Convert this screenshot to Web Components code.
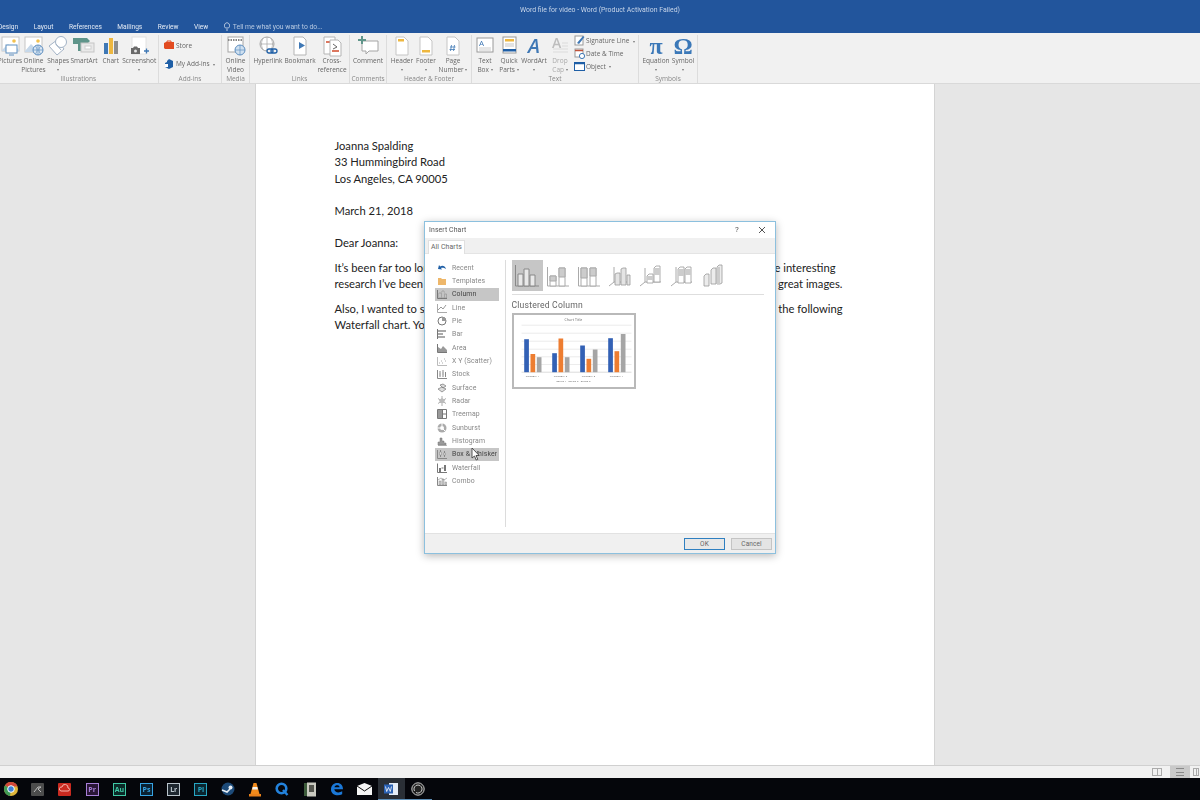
<!DOCTYPE html>
<html>
<head>
<meta charset="utf-8">
<title>Word</title>
<style>
    html, body { margin: 0; height: 100%; overflow: hidden; background: #e6e6e6; }
    svg { display: block; }
</style>
</head>
<body>
<word-app>
    <title-bar slot="top"></title-bar>
    <word-ribbon slot="top">
        <r-group label="Illustrations" w="160.5" style="margin-left:-1.5px">
            <r-btn w="23">
                <svg slot="icon" width="22" height="22" viewBox="0 0 22 22"><rect x="3" y="2" width="17" height="14" fill="#fff" stroke="#c5c5c5"/><path d="M3 15l6-6 4 4 3-2 4 4v1H3z" fill="#c6d8ea"/><circle cx="15" cy="6" r="1.8" fill="#f2c14e"/><rect x="7" y="10" width="11" height="8" fill="#fff" stroke="#5f8fc0"/><path d="M10 20h5" stroke="#5f8fc0"/></svg>
                Pictures
            </r-btn>
            <r-btn w="24">
                <svg slot="icon" width="22" height="22" viewBox="0 0 22 22"><rect x="2" y="2" width="17" height="15" fill="#fff" stroke="#c5c5c5"/><path d="M2 16l6-7 4 4 3-2 4 4v2H2z" fill="#c6d8ea"/><circle cx="15" cy="6" r="1.8" fill="#f2c14e"/><circle cx="15" cy="15" r="5" fill="#dce8f4" stroke="#5f8fc0"/><path d="M10 15h10M15 10v10M12.500 11c2 3 2 5 0 8M17.500 11c-2 3-2 5 0 8" stroke="#5f8fc0" stroke-width=".7" fill="none"/></svg>
                Online<br>Pictures
            </r-btn>
            <r-btn w="25.5">
                <svg slot="icon" width="22" height="22" viewBox="0 0 22 22"><path d="M2 11l8-6 7 9-7 6z" fill="#fff" stroke="#a3b3c6"/><circle cx="14" cy="7" r="5.500" fill="#fff" stroke="#a3b3c6"/><path d="M9 9l5 6" stroke="#a3b3c6"/></svg>
                Shapes<br><r-caret></r-caret>
            </r-btn>
            <r-btn w="26">
                <svg slot="icon" width="24" height="22" viewBox="0 0 24 22"><path d="M1 3h14l3 3-3 3H9v7H6V9H1z" fill="#5f958a"/><rect x="9" y="8" width="13" height="9" fill="#e9e9e9" stroke="#c5c5c5"/><rect x="13" y="11" width="6" height="3" fill="#fff" stroke="#d0d0d0"/></svg>
                SmartArt
            </r-btn>
            <r-btn w="27.5">
                <svg slot="icon" width="20" height="22" viewBox="0 0 20 22"><rect x="3" y="8" width="4" height="11" fill="#3f78b5"/><rect x="8" y="3" width="4" height="16" fill="#eeb73f"/><rect x="13" y="6" width="4" height="13" fill="#8e8e8e"/></svg>
                Chart
            </r-btn>
            <r-btn w="29.500">
                <svg slot="icon" width="24" height="22" viewBox="0 0 24 22"><rect x="5" y="2" width="14" height="17" fill="#fff" stroke="#e2e2e2"/><path d="M4 13h2l1-1.500h3l1 1.500h2v6H4z" fill="#6a6a6a"/><circle cx="8.500" cy="16" r="1.500" fill="#e5e5e5"/><path d="M17 16h5M19.500 13.500v5" stroke="#3f78b5" stroke-width="1.300"/></svg>
                Screenshot<br><r-caret></r-caret>
            </r-btn>
        </r-group>
        <r-group label="Add-ins" w="63" stack>
            <r-small gap="2">
                <svg slot="icon" width="10" height="10" viewBox="0 0 10 10"><path d="M0 3l2-1h8v7H1L0 8z" fill="#e24b20"/><path d="M3 3V1h4v2" fill="none" stroke="#e24b20"/></svg>
                Store
            </r-small>
            <r-small gap="2">
                <svg slot="icon" width="10" height="10" viewBox="0 0 10 10"><path d="M5 0l4 2v6L5 10 1 8V4l2-1V2z" fill="#1f5fa6"/><rect x="1" y="5" width="3" height="3" fill="#fff"/></svg>
                My Add-ins &nbsp;<r-caret></r-caret>
            </r-small>
        </r-group>
        <r-group label="Media" w="28">
            <r-btn w="27">
                <svg slot="icon" width="22" height="22" viewBox="0 0 22 22"><rect x="3" y="2" width="15" height="15" fill="#fff" stroke="#a5a5a5"/><path d="M3 5h15" stroke="#888" stroke-width="2" stroke-dasharray="1.500 1"/><circle cx="15" cy="15" r="5" fill="#cfe0f0" stroke="#5f8fc0"/><path d="M10 15h10M15 10v10" stroke="#5f8fc0" stroke-width=".7"/></svg>
                Online<br>Video
            </r-btn>
        </r-group>
        <r-group label="Links" w="100" pad="2">
            <r-btn w="32">
                <svg slot="icon" width="24" height="22" viewBox="0 0 24 22"><circle cx="11" cy="9" r="7" fill="#fff" stroke="#a5a5a5"/><path d="M4 9h14M11 2v14M7 3.500c-2 3-2 8 0 11M15 3.500c2 3 2 8 0 11" stroke="#a5a5a5" stroke-width=".7" fill="none"/><rect x="11" y="14" width="6" height="4" rx="2" fill="#f1f1f1" stroke="#1f5fa6" stroke-width="1.300"/><rect x="15" y="14" width="6" height="4" rx="2" fill="none" stroke="#1f5fa6" stroke-width="1.300"/></svg>
                Hyperlink
            </r-btn>
            <r-btn w="32">
                <svg slot="icon" width="20" height="22" viewBox="0 0 20 22"><path d="M4 2h9l3 3v15H4z" fill="#fff" stroke="#b5b5b5"/><path d="M9 7l6 3.500L9 14z" fill="#3f78b5"/></svg>
                Bookmark
            </r-btn>
            <r-btn w="32">
                <svg slot="icon" width="22" height="22" viewBox="0 0 22 22"><path d="M3 2h11v17H3z" fill="#fff" stroke="#b5b5b5"/><path d="M5 7h6" stroke="#d04a2a" stroke-width="1.500"/><path d="M9 5h8l3 3v13H9z" fill="#fff" stroke="#b5b5b5"/><path d="M11 16h7" stroke="#d04a2a" stroke-width="1.500"/><path d="M12 9l4 3-4 2" fill="none" stroke="#666"/></svg>
                Cross-<br>reference
            </r-btn>
        </r-group>
        <r-group label="Comments" w="37">
            <r-btn w="36">
                <svg slot="icon" width="24" height="22" viewBox="0 0 24 22"><path d="M6 6h16v10H13l-3 3v-3H6z" fill="#fff" stroke="#a5a5a5"/><path d="M2 5h8M6 1v8" stroke="#5f958a" stroke-width="2"/></svg>
                Comment
            </r-btn>
        </r-group>
        <r-group label="Header &amp; Footer" w="85" pad="3">
            <r-btn w="24">
                <svg slot="icon" width="18" height="22" viewBox="0 0 18 22"><path d="M3 2h8l4 4v14H3z" fill="#fff" stroke="#c5c5c5"/><rect x="5" y="4" width="6" height="2.500" fill="#eeb73f"/></svg>
                Header<br><r-caret></r-caret>
            </r-btn>
            <r-btn w="24">
                <svg slot="icon" width="18" height="22" viewBox="0 0 18 22"><path d="M3 2h8l4 4v14H3z" fill="#fff" stroke="#c5c5c5"/><rect x="5" y="15" width="8" height="2.500" fill="#eeb73f"/></svg>
                Footer<br><r-caret></r-caret>
            </r-btn>
            <r-btn w="30">
                <svg slot="icon" width="18" height="22" viewBox="0 0 18 22"><path d="M3 2h8l4 4v14H3z" fill="#fff" stroke="#c5c5c5"/><path d="M7.500 10l-1 6M10.500 10l-1 6M6 12h5.500M5.500 14.500h5.500" stroke="#3f78b5" stroke-width=".8"/></svg>
                Page<br>Number <r-caret></r-caret>
            </r-btn>
        </r-group>
        <r-group label="Text" w="167" pad="2">
            <r-btn w="22">
                <svg slot="icon" width="20" height="22" viewBox="0 0 20 22"><rect x="2" y="3" width="16" height="14" fill="#fff" stroke="#9a9a9a"/><path d="M4 13h12M4 15h12" stroke="#ccc"/><text x="4" y="11" font-family="Open Sans" font-size="8" fill="#3f78b5">A</text></svg>
                Text<br>Box <r-caret></r-caret>
            </r-btn>
            <r-btn w="26">
                <svg slot="icon" width="18" height="22" viewBox="0 0 18 22"><rect x="3" y="2" width="13" height="16" fill="#fff" stroke="#9a9a9a"/><rect x="5" y="4" width="9" height="2.500" fill="#eeb73f"/><path d="M5 9h9M5 11h9" stroke="#c5c5c5"/><rect x="3" y="14" width="13" height="2.500" fill="#1f5fa6"/></svg>
                Quick<br>Parts <r-caret></r-caret>
            </r-btn>
            <r-btn w="24">
                <span slot="icon" class="wa">A</span>
                WordArt<br><r-caret></r-caret>
            </r-btn>
            <r-btn w="28" dim>
                <svg slot="icon" width="20" height="22" viewBox="0 0 20 22"><path d="M3 17h15M3 14h15M12 11h6M12 8h6" stroke="#e2e2e2" stroke-width="1.500"/><text x="2" y="13" font-family="Open Sans" font-size="14" font-weight="600" fill="#bdbdbd">A</text></svg>
                Drop<br>Cap <r-caret></r-caret>
            </r-btn>
            <r-stack>
                <r-small gap="1">
                    <svg slot="icon" width="11" height="11" viewBox="0 0 11 11"><rect x="1" y="1" width="8" height="9" fill="#fff" stroke="#9a9a9a"/><path d="M3 8l6-7 1.500 1L5 9z" fill="#3f78b5"/></svg>
                    Signature Line &nbsp;<r-caret></r-caret>
                </r-small>
                <r-small gap="1">
                    <svg slot="icon" width="11" height="11" viewBox="0 0 11 11"><rect x="1" y="1" width="8" height="8" fill="#fff" stroke="#9a9a9a"/><path d="M1 2.500h8" stroke="#c0533a" stroke-width="1.500"/><circle cx="8" cy="8" r="2.600" fill="#fff" stroke="#3f78b5"/></svg>
                    Date &amp; Time
                </r-small>
                <r-small gap="1">
                    <svg slot="icon" width="11" height="11" viewBox="0 0 11 11"><rect x=".5" y="1.500" width="10" height="8" fill="#fff" stroke="#1f5fa6"/><path d="M.5 2.500h10" stroke="#1f5fa6" stroke-width="1.500"/></svg>
                    Object &nbsp;<r-caret></r-caret>
                </r-small>
            </r-stack>
        </r-group>
        <r-group label="Symbols" w="59" pad="4">
            <r-btn w="26">
                <span slot="icon" class="sym">&pi;</span>
                Equation<br><r-caret></r-caret>
            </r-btn>
            <r-btn w="28">
                <span slot="icon" class="sym">&Omega;</span>
                Symbol<br><r-caret></r-caret>
            </r-btn>
        </r-group>
    </word-ribbon>

    <doc-page slot="doc">
        <doc-para tight>Joanna Spalding</doc-para>
        <doc-para tight>33 Hummingbird Road</doc-para>
        <doc-para blank>Los Angeles, CA 90005</doc-para>
        <doc-para blank>March 21, 2018</doc-para>
        <doc-para>Dear Joanna:</doc-para>
        <doc-para tight split style="margin-right:7px"><span>It’s been far too long</span><span>e interesting</span></doc-para>
        <doc-para split><span>research I’ve been doing</span><span>great images.</span></doc-para>
        <doc-para tight split><span>Also, I wanted to share</span><span>the following</span></doc-para>
        <doc-para>Waterfall chart. You can</doc-para>
    </doc-page>

    <status-bar slot="bottom"></status-bar>
    <task-bar slot="bottom">
        <task-icon>
            <svg width="14" height="14" viewBox="0 0 14 14"><circle cx="7" cy="7" r="7" fill="#e0b53a"/><path d="M7 7L1 3.500A7 7 0 0 1 13.500 4.500H7z" fill="#d2463a"/><path d="M7 7L1 3.500A7 7 0 0 0 6 14z" fill="#3f9a55"/><circle cx="7" cy="7" r="3.300" fill="#3f7fd6" stroke="#fff"/></svg>
        </task-icon>
        <task-icon>
            <svg width="13" height="13" viewBox="0 0 13 13"><rect width="13" height="13" rx="1" fill="#4c4c4c"/><path d="M3 9l4-5 3 0-3 2 3 3" fill="none" stroke="#bdbdbd"/></svg>
        </task-icon>
        <task-icon>
            <svg width="13" height="13" viewBox="0 0 13 13"><rect width="13" height="13" rx="1" fill="#c92a20"/><path d="M3 8a2 2 0 0 1 1-4 3 3 0 0 1 6 1 1.500 1.500 0 0 1 0 3z" fill="none" stroke="#f3b5ad"/></svg>
        </task-icon>
        <task-icon label="Pr" color="#a77fd8" bg="#2a1637"></task-icon>
        <task-icon label="Au" color="#3fc8a4" bg="#0b2a28"></task-icon>
        <task-icon label="Ps" color="#36a4e4" bg="#0a2233"></task-icon>
        <task-icon label="Lr" color="#b9c4cc" bg="#1e2730"></task-icon>
        <task-icon label="Pl" color="#27a6c4" bg="#0a2530"></task-icon>
        <task-icon>
            <svg width="14" height="14" viewBox="0 0 14 14"><circle cx="7" cy="7" r="6.500" fill="#1d4a78"/><path d="M1 8l5 2 3-3" stroke="#e8eef5" stroke-width="1.600" fill="none"/><circle cx="9.500" cy="5.500" r="2" fill="#e8eef5"/></svg>
        </task-icon>
        <task-icon>
            <svg width="14" height="15" viewBox="0 0 14 15"><path d="M5.500 1h3l3 11h-9z" fill="#f08a1c"/><path d="M4.700 5h4.600l.6 2.500H4.100z" fill="#f3f3f3"/><rect x="1" y="12" width="12" height="2.500" fill="#e8801a"/></svg>
        </task-icon>
        <task-icon>
            <svg width="14" height="14" viewBox="0 0 14 14"><circle cx="6.500" cy="6.500" r="4.800" fill="none" stroke="#2382dc" stroke-width="2.600"/><path d="M8 8l4.500 5" stroke="#2382dc" stroke-width="2.400"/></svg>
        </task-icon>
        <task-icon>
            <svg width="14" height="15" viewBox="0 0 14 15"><rect x="1" y="1" width="4" height="13" fill="#3c5a3a"/><rect x="4" y="0.500" width="9" height="14" fill="#c9c9c0"/><rect x="6" y="3" width="5" height="7" fill="#55564f"/></svg>
        </task-icon>
        <task-icon>
            <svg width="14" height="14" viewBox="0 0 14 14"><path d="M1 7.500C1 3.500 3.700 1 7.200 1c3.800 0 5.800 2.700 5.800 6.300H4.300c.2 3.300 4.800 4 7.900 2v3C8 14.300 1 13.400 1 7.500zM4.500 5.300h5c0-2.600-4.600-2.600-5 0z" fill="#1b78d8"/></svg>
        </task-icon>
        <task-icon>
            <svg width="15" height="12" viewBox="0 0 15 12"><path d="M0 3l7.500-3L15 3v9H0z" fill="#f5f5f5"/><path d="M0 3l7.500 5L15 3" fill="none" stroke="#0a0a0a"/></svg>
        </task-icon>
        <task-icon active>
            <svg width="15" height="14" viewBox="0 0 15 14"><rect x="5" y="1" width="9" height="12" fill="#e6eef8"/><rect x="0" y="2.500" width="9" height="9" fill="#2b62b4"/><path d="M1.500 4.500l1.200 5 1.800-4 1.800 4 1.200-5" fill="none" stroke="#fff" stroke-width=".8"/></svg>
        </task-icon>
        <task-icon under>
            <svg width="14" height="14" viewBox="0 0 14 14"><circle cx="7" cy="7" r="6.200" fill="#222" stroke="#c9c9c9"/><path d="M7 3a4 4 0 0 1 3.500 6M3.500 9A4 4 0 0 1 7 3M5 10.500a4 4 0 0 0 5.500-1.500" fill="none" stroke="#c9c9c9"/></svg>
        </task-icon>
    </task-bar>

    <chart-dialog slot="overlay"></chart-dialog>
</word-app>

<template id="chart-dialog-tpl">
    <style>
        :host {
            position: absolute;
            left: 424px;
            top: 221px;
            width: 352px;
            height: 333px;
            box-sizing: border-box;
            display: flex;
            flex-direction: column;
            background: #fff;
            border: 1.5px solid #8cc0de;
            box-shadow: 0 2px 8px rgba(0, 0, 0, 0.28);
            font: 6.9px Roboto, sans-serif;
            letter-spacing: .1px;
            color: #666;
            filter: blur(.3px);
        }

        .head {
            height: 15px;
            margin-bottom: 1px;
            display: flex;
            align-items: center;
            padding: 0 9px 0 4px;
            flex: none;
            color: #555;
        }
        .head .name { flex: 1; }
        .head .help { margin-right: 19px; font-size: 8px; }

        .tabs {
            height: 16px;
            flex: none;
            background: #f0f0f0;
            padding: 2px 0 0 3px;
            box-sizing: border-box;
            border-bottom: 1px solid #e4e4e4;
            display: flex;
        }
        .tab {
            background: #fff;
            border: 1px solid #e0e0e0;
            border-bottom: none;
            padding: 0 2px;
            height: 14px;
            line-height: 13px;
            box-sizing: border-box;
        }

        .main {
            flex: 1;
            min-height: 0;
            display: flex;
            padding: 6px 0;
        }
        .list {
            width: 80.5px;
            box-sizing: border-box;
            padding: 1px 6px 0 10px;
            border-right: 1px solid #dcdcdc;
            flex: none;
            position: relative;
        }
        .right {
            flex: 1;
            padding: 0 11px 0 6px;
        }
        .kinds {
            display: flex;
            border-bottom: 1px solid #dedede;
            height: 33.5px;
        }
        .kind {
            width: 31px;
            height: 31px;
            display: flex;
            align-items: center;
            justify-content: center;
        }
        .kind.on { background: #c6c6c6; }
        h3 {
            font: 400 8.6px Roboto, sans-serif;
            letter-spacing: .2px;
            color: #666;
            margin: 4px 0 1px;
            height: 13px;
            line-height: 13px;
        }
        .preview {
            width: 124px;
            height: 76px;
            box-sizing: border-box;
            border: 2.5px solid #b9b9b9;
            background: #fff;
        }
        .foot {
            height: 19px;
            flex: none;
            background: #f0f0f0;
            border-top: 1px solid #e2e2e2;
            display: flex;
            align-items: center;
            justify-content: flex-end;
            gap: 6px;
            padding-right: 3px;
        }
        .btn {
            width: 41px;
            height: 12px;
            box-sizing: border-box;
            background: #e4e4e4;
            border: 1px solid #c4c4c4;
            text-align: center;
            line-height: 10px;
            font-size: 6.5px;
        }
        .btn.ok {
            border: 1.5px solid #2f7fc0;
            background: #e8e8e8;
        }
        .cursor {
            position: absolute;
            left: 46px;
            top: 187px;
        }
    </style>
    <div class="head">
        <span class="name">Insert Chart</span>
        <span class="help">?</span>
        <svg width="8" height="8" viewBox="0 0 8 8"><path d="M1 1l6 6M7 1L1 7" stroke="#555" fill="none"/></svg>
    </div>
    <div class="tabs"><div class="tab">All Charts</div></div>
    <div class="main">
        <div class="list">
            <chart-item label="Recent"><svg width="10" height="10" viewBox="0 0 10 10"><path d="M1 6l1-4 1.200 1.500C5.500 2 8 3 9 6 7 4.500 5 4.500 4 5l1 1.500z" fill="#1f5fa6"/></svg></chart-item>
            <chart-item label="Templates"><svg width="10" height="10" viewBox="0 0 10 10"><path d="M1 2h3l1 1h4v6H1z" fill="#eeb76a"/></svg></chart-item>
            <chart-item label="Column" selected><svg width="10" height="10" viewBox="0 0 10 10"><path d="M.5 1v8.500H10" fill="none" stroke="#777"/><path d="M2 4h2v5H2zM5 2h2v7H5zM8 5h1.500v4H8z" fill="#ddd" stroke="#888" stroke-width=".6"/></svg></chart-item>
            <chart-item label="Line"><svg width="10" height="10" viewBox="0 0 10 10"><path d="M.5 1v8.500H10" fill="none" stroke="#aaa"/><path d="M1 7l3-3 2 2 3-4" fill="none" stroke="#999"/></svg></chart-item>
            <chart-item label="Pie"><svg width="10" height="10" viewBox="0 0 10 10"><circle cx="5" cy="5" r="4" fill="#fff" stroke="#777"/><path d="M5 5V1a4 4 0 0 1 4 4z" fill="#999"/></svg></chart-item>
            <chart-item label="Bar"><svg width="10" height="10" viewBox="0 0 10 10"><path d="M.5 0v10" stroke="#777"/><path d="M1 1h8v2H1zM1 4h5v2H1zM1 7h7v2H1z" fill="#aaa"/></svg></chart-item>
            <chart-item label="Area"><svg width="10" height="10" viewBox="0 0 10 10"><path d="M.5 1v8.500H10" fill="none" stroke="#777"/><path d="M1 9V4l3 2 2-3 4 4v2z" fill="#999"/></svg></chart-item>
            <chart-item label="X Y (Scatter)"><svg width="10" height="10" viewBox="0 0 10 10"><path d="M.5 1v8.500H10" fill="none" stroke="#bbb"/><path d="M2 7h1M4 5h1M5 7h1M7 3h1M8 5h1" stroke="#aaa"/></svg></chart-item>
            <chart-item label="Stock"><svg width="10" height="10" viewBox="0 0 10 10"><path d="M.5 1v8.500H10" fill="none" stroke="#888"/><path d="M3 2v6M6 1v7M8.500 3v5" stroke="#888"/><path d="M2 4h2v3H2zM5 3h2v3H5z" fill="#bbb"/></svg></chart-item>
            <chart-item label="Surface"><svg width="10" height="10" viewBox="0 0 10 10"><path d="M1 6l4-2 4 2-4 3zM3 2l3-1 3 2-3 2z" fill="#ddd" stroke="#777" stroke-width=".7"/></svg></chart-item>
            <chart-item label="Radar"><svg width="10" height="10" viewBox="0 0 10 10"><path d="M5 0v10M1 2.500l8 5M9 2.500l-8 5" stroke="#999" stroke-width=".8"/><path d="M5 2l3 2-1 3H3L2 4z" fill="#bbb"/></svg></chart-item>
            <chart-item label="Treemap"><svg width="10" height="10" viewBox="0 0 10 10"><path d="M.5.5h9v9h-9z" fill="#fff" stroke="#777"/><path d="M1 1h4v8H1z" fill="#999"/><path d="M5.500 1v8M5.500 5h4" stroke="#777"/></svg></chart-item>
            <chart-item label="Sunburst"><svg width="10" height="10" viewBox="0 0 10 10"><circle cx="5" cy="5" r="4.500" fill="#aaa"/><circle cx="5" cy="5" r="2" fill="#fff"/><path d="M5 0v3M0 5h3M8 8L6 6" stroke="#fff"/></svg></chart-item>
            <chart-item label="Histogram"><svg width="10" height="10" viewBox="0 0 10 10"><path d="M1 9.500h9M1 9V6h2V2h2v3h2v2h2v2z" fill="#999" stroke="#777" stroke-width=".5"/></svg></chart-item>
            <chart-item label="Box &amp; Whisker" selected><svg width="10" height="10" viewBox="0 0 10 10"><path d="M.5 1v8.500H10" fill="none" stroke="#888"/><path d="M3.500 1v7M7.500 2v6" stroke="#888"/><path d="M2.500 3h2v3h-2zM6.500 4h2v2h-2z" fill="#ddd" stroke="#888" stroke-width=".5"/></svg></chart-item>
            <chart-item label="Waterfall"><svg width="10" height="10" viewBox="0 0 10 10"><path d="M.5.500v9H10" fill="none" stroke="#777"/><path d="M2 5h2v4H2zM7 2h2v6H7z" fill="#777"/><path d="M4.500 4h2v2h-2z" fill="#bbb"/></svg></chart-item>
            <chart-item label="Combo"><svg width="10" height="10" viewBox="0 0 10 10"><path d="M.5 1v8.500H10" fill="none" stroke="#888"/><path d="M2 5h2v4H2zM5 3h2v6H5zM8 6h1.500v3H8z" fill="#ccc" stroke="#888" stroke-width=".5"/><path d="M1 4l3-2 3 2 3-2" fill="none" stroke="#888" stroke-width=".6"/></svg></chart-item>
            <svg class="cursor" width="10" height="14" viewBox="0 0 10 14"><path d="M1 1v10l2.500-2 1.700 4 1.600-.7L5 8.500h3.200z" fill="#fff" stroke="#333" stroke-width=".8"/></svg>
        </div>
        <div class="right">
            <div class="kinds">
                <div class="kind on"><svg width="26" height="24" viewBox="0 0 26 24"><path d="M1.500 1v21H25" fill="none" stroke="#888"/><path d="M4 10h5v12H4zM10 5h5v17h-5zM16 11h5v11h-5z" fill="#e9e9e9" stroke="#888"/></svg></div>
                <div class="kind"><svg width="24" height="24" viewBox="0 0 24 24"><path d="M1.500 3v19H23" fill="none" stroke="#aaa"/><path d="M4 12h6v10H4zM13 4h6v18h-6z" fill="#fff" stroke="#aaa"/><path d="M4 12h6v5H4zM13 4h6v9h-6z" fill="#ccc" stroke="#aaa"/></svg></div>
                <div class="kind"><svg width="24" height="24" viewBox="0 0 24 24"><path d="M1.500 3v19H23" fill="none" stroke="#aaa"/><path d="M4 4h6v18H4zM13 4h6v18h-6z" fill="#fff" stroke="#aaa"/><path d="M4 4h6v10H4zM13 4h6v8h-6z" fill="#ccc" stroke="#aaa"/></svg></div>
                <div class="kind"><svg width="24" height="24" viewBox="0 0 24 24"><path d="M1 22l5-4V3M6 18h16" fill="none" stroke="#aaa"/><path d="M7 10l2-1h3v12H7zM13 5l2-1h3v17h-5zM19 11h3v10h-3z" fill="#e4e4e4" stroke="#999" stroke-width=".8"/></svg></div>
                <div class="kind"><svg width="24" height="24" viewBox="0 0 24 24"><path d="M1 22l5-4V4M6 18h16" fill="none" stroke="#aaa"/><path d="M8 12l2-2h4v9H8zM15 4l2-2h4v16h-6z" fill="#fff" stroke="#999" stroke-width=".8"/><path d="M8 12h6v4H8zM15 4h6v7h-6z" fill="#ccc"/></svg></div>
                <div class="kind"><svg width="24" height="24" viewBox="0 0 24 24"><path d="M1 22l5-4V3M6 18h16" fill="none" stroke="#aaa"/><path d="M8 5l2-2h4v16H8zM15 5l2-2h4v16h-6z" fill="#fff" stroke="#999" stroke-width=".8"/><path d="M8 5h6v7H8zM15 5h6v6h-6z" fill="#ccc"/></svg></div>
                <div class="kind"><svg width="24" height="24" viewBox="0 0 24 24"><path d="M3 12l2-2h3v12H3zM10 6l2-2h3v16h-5zM16 3l2-2h3v18l-2 1h-3z" fill="#ececec" stroke="#999" stroke-width=".8"/><path d="M16 3h3v17h-3z" fill="#ccc"/></svg></div>
            </div>
            <h3>Clustered Column</h3>
            <div class="preview">
                <svg width="119" height="71" viewBox="2.500 2.500 119 71">
                    <text x="62" y="8" font-family="Open Sans" font-size="3.500" text-anchor="middle" fill="#666">Chart Title</text>
                    <path d="M10 12.700h110M10 20.700h110M10 28.700h110M10 36.700h110M10 44.300h110M10 52h110" stroke="#e4e4e4" stroke-width=".7"/>
                    <path d="M10 59.700h110" stroke="#ccc" stroke-width=".7"/>
                    <g fill="#3361b5">
                        <rect x="12.700" y="26.700" width="4.700" height="33"/>
                        <rect x="40.700" y="40.700" width="4.700" height="19"/>
                        <rect x="68.700" y="33" width="4.700" height="26.700"/>
                        <rect x="96.700" y="25.700" width="4.700" height="34"/>
                    </g>
                    <g fill="#ed7d31">
                        <rect x="19" y="41.500" width="4.700" height="18.200"/>
                        <rect x="47" y="26" width="4.700" height="33.700"/>
                        <rect x="75" y="46.300" width="4.700" height="13.400"/>
                        <rect x="103" y="38.700" width="4.700" height="21"/>
                    </g>
                    <g fill="#a5a5a5">
                        <rect x="25.300" y="44.700" width="4.700" height="15"/>
                        <rect x="53.300" y="44.700" width="4.700" height="15"/>
                        <rect x="81.300" y="37" width="4.700" height="22.700"/>
                        <rect x="109.300" y="21.500" width="4.700" height="38.200"/>
                    </g>
                    <g font-family="Open Sans" font-size="2.500" text-anchor="middle" fill="#555">
                        <text x="21" y="64">Category 1</text>
                        <text x="49" y="64">Category 2</text>
                        <text x="77" y="64">Category 3</text>
                        <text x="105" y="64">Category 4</text>
                        <text x="62" y="69">Series 1 &#160; Series 2 &#160; Series 3</text>
                    </g>
                </svg>
            </div>
        </div>
    </div>
    <div class="foot">
        <div class="btn ok">OK</div>
        <div class="btn">Cancel</div>
    </div>
</template>

<script>
class WordApp extends HTMLElement {
    connectedCallback() {
        this.attachShadow({ mode: 'open' });
        this.shadowRoot.innerHTML = `
            <style>
                :host {
                    display: flex;
                    flex-direction: column;
                    position: relative;
                    width: 100%;
                    height: 100vh;
                    overflow: hidden;
                    background: #e6e6e6;
                }
                .doc {
                    flex: 1;
                    min-height: 0;
                    display: flex;
                    justify-content: center;
                    padding-right: 11px;
                    overflow: hidden;
                }
            </style>
            <slot name="top"></slot>
            <div class="doc"><slot name="doc"></slot></div>
            <slot name="bottom"></slot>
            <slot name="overlay"></slot>
        `;
    }
}

class TitleBar extends HTMLElement {
    connectedCallback() {
        this.attachShadow({ mode: 'open' });
        this.shadowRoot.innerHTML = `
            <style>
                :host {
                    display: flex;
                    flex-direction: column;
                    flex: none;
                    height: 33px;
                    background: #22559c;
                    font: 6.9px Roboto, sans-serif;
                    color: #e4ebf5;
                    filter: blur(.25px);
                }
                .title {
                    height: 20px;
                    line-height: 21px;
                    text-align: center;
                    color: #c7d5e9;
                }
                .tabs {
                    display: flex;
                    align-items: center;
                    height: 13px;
                    margin-left: -2px;
                    font-size: 6.6px;
                }
                .tabs span { margin-right: 15.5px; }
                .tell {
                    display: flex;
                    align-items: center;
                    gap: 3px;
                    color: #b7c9e2;
                    font-size: 6.8px;
                }
            </style>
            <div class="title">Word file for video - Word (Product Activation Failed)</div>
            <div class="tabs">
                <span>Design</span>
                <span>Layout</span>
                <span>References</span>
                <span>Mailings</span>
                <span>Review</span>
                <span>View</span>
                <div class="tell">
                    <svg width="6" height="9" viewBox="0 0 6 9"><path d="M1.500 6C.5 5 .3 4.200.5 3 .8 1.500 2 .8 3 .8S5.200 1.500 5.500 3c.2 1.200 0 2-1 3zM2 8h2" fill="none" stroke="#dfe7f2" stroke-width=".8"/></svg>
                    Tell me what you want to do...
                </div>
            </div>
        `;
    }
}

class WordRibbon extends HTMLElement {
    connectedCallback() {
        this.attachShadow({ mode: 'open' });
        this.shadowRoot.innerHTML = `
            <style>
                :host {
                    display: flex;
                    flex: none;
                    height: 51px;
                    box-sizing: border-box;
                    padding-top: 2px;
                    background: #f1f1f1;
                    border-bottom: 1px solid #d9d9d9;
                    font: 6.5px "Open Sans", sans-serif;
                    color: #666;
                    overflow: hidden;
                    filter: blur(.3px);
                }
            </style>
            <slot></slot>
        `;
        const style = document.createElement('style');
        style.textContent = `
            .wa { font: italic 600 20px/20px "Open Sans", sans-serif; color: #3f78b5; height: 20px; }
            .sym { font: 700 24px/20px "Liberation Serif", serif; color: #3b78b8; height: 20px; }
        `;
        this.appendChild(style);
    }
}

class RGroup extends HTMLElement {
    connectedCallback() {
        const w = this.getAttribute('w');
        const pad = this.getAttribute('pad') || 0;
        const stack = this.hasAttribute('stack');
        this.attachShadow({ mode: 'open' });
        this.shadowRoot.innerHTML = `
            <style>
                :host {
                    display: flex;
                    flex-direction: column;
                    flex: none;
                    box-sizing: border-box;
                    width: ${w}px;
                    height: 49px;
                    border-right: 1px solid #dcdcdc;
                }
                .items {
                    flex: 1;
                    min-height: 0;
                    display: flex;
                    padding-left: ${pad}px;
                    ${stack ? 'flex-direction: column; justify-content: space-around; padding: 1px 0 1px 5px;' : ''}
                }
                .label {
                    height: 10px;
                    line-height: 10px;
                    text-align: center;
                    color: #888;
                    white-space: nowrap;
                }
            </style>
            <div class="items"><slot></slot></div>
            <div class="label">${this.getAttribute('label')}</div>
        `;
    }
}

class RBtn extends HTMLElement {
    connectedCallback() {
        this.attachShadow({ mode: 'open' });
        this.shadowRoot.innerHTML = `
            <style>
                :host {
                    display: flex;
                    flex-direction: column;
                    align-items: center;
                    flex: none;
                    width: ${this.getAttribute('w')}px;
                    ${this.hasAttribute('dim') ? 'color: #aaa;' : ''}
                }
                .icon {
                    height: 21px;
                    display: flex;
                    align-items: center;
                    justify-content: center;
                }
                .text {
                    line-height: 9px;
                    text-align: center;
                    white-space: nowrap;
                }
            </style>
            <div class="icon"><slot name="icon"></slot></div>
            <div class="text"><slot></slot></div>
        `;
    }
}

class RSmall extends HTMLElement {
    connectedCallback() {
        this.attachShadow({ mode: 'open' });
        this.shadowRoot.innerHTML = `
            <style>
                :host {
                    display: flex;
                    align-items: center;
                    gap: ${this.getAttribute('gap') || 3}px;
                    height: 12px;
                    white-space: nowrap;
                }
            </style>
            <slot name="icon"></slot>
            <div><slot></slot></div>
        `;
    }
}

class RStack extends HTMLElement {
    connectedCallback() {
        this.attachShadow({ mode: 'open' });
        this.shadowRoot.innerHTML = `
            <style>
                :host {
                    display: flex;
                    flex-direction: column;
                    justify-content: center;
                    gap: 1px;
                    height: 37px;
                    flex: none;
                }
            </style>
            <slot></slot>
        `;
    }
}

class RCaret extends HTMLElement {
    connectedCallback() {
        this.attachShadow({ mode: 'open' });
        this.shadowRoot.innerHTML = `
            <style>
                :host {
                    display: inline-block;
                    width: 0;
                    height: 0;
                    vertical-align: middle;
                    border-left: 1.5px solid transparent;
                    border-right: 1.5px solid transparent;
                    border-top: 2px solid #777;
                }
            </style>
        `;
    }
}

class DocPage extends HTMLElement {
    connectedCallback() {
        this.attachShadow({ mode: 'open' });
        this.shadowRoot.innerHTML = `
            <style>
                :host {
                    display: block;
                    width: 680px;
                    box-sizing: border-box;
                    background: #fff;
                    border-left: 1px solid #d4d4d4;
                    border-right: 1px solid #d4d4d4;
                    padding: 54px 91px 0 79px;
                    font: 11.2px Lato, sans-serif;
                    color: #222;
                }
            </style>
            <slot></slot>
        `;
    }
}

class DocPara extends HTMLElement {
    connectedCallback() {
        const gap = this.hasAttribute('tight') ? 0 : this.hasAttribute('blank') ? 16 : 8.5;
        const split = this.hasAttribute('split');
        this.attachShadow({ mode: 'open' });
        this.shadowRoot.innerHTML = `
            <style>
                :host {
                    display: ${split ? 'flex' : 'block'};
                    justify-content: space-between;
                    line-height: 16.3px;
                    margin-bottom: ${gap}px;
                    white-space: nowrap;
                }
            </style>
            <slot></slot>
        `;
    }
}

class StatusBar extends HTMLElement {
    connectedCallback() {
        this.attachShadow({ mode: 'open' });
        this.shadowRoot.innerHTML = `
            <style>
                :host {
                    display: flex;
                    flex: none;
                    justify-content: flex-end;
                    align-items: stretch;
                    height: 13px;
                    box-sizing: border-box;
                    background: #f1f1f1;
                    border-top: 1px solid #d0d0d0;
                    filter: blur(.3px);
                }
                .v {
                    width: 20px;
                    display: flex;
                    align-items: center;
                    justify-content: center;
                }
                .v.on { background: #c9c9c9; margin: 0 3px; }
                .v i {
                    display: block;
                    width: 8px;
                    height: 6px;
                    border: 1px solid #aaa;
                    background: linear-gradient(#aaa, #aaa) center / 1px 100% no-repeat;
                }
                .v.on i {
                    border-width: 1px 0;
                    border-color: #888;
                    background: linear-gradient(#888, #888) center / 100% 1px no-repeat;
                }
            </style>
            <div class="v"><i></i></div>
            <div class="v on"><i></i></div>
            <div class="v" style="width:7px;justify-content:flex-start"><i style="width:4px"></i></div>
        `;
    }
}

class TaskBar extends HTMLElement {
    connectedCallback() {
        this.attachShadow({ mode: 'open' });
        this.shadowRoot.innerHTML = `
            <style>
                :host {
                    display: flex;
                    flex: none;
                    height: 22px;
                    background: #05060b;
                    filter: blur(.3px);
                }
                .row { display: flex; margin-left: -3px; }
            </style>
            <div class="row"><slot></slot></div>
        `;
    }
}

class TaskIcon extends HTMLElement {
    connectedCallback() {
        const label = this.getAttribute('label');
        const color = this.getAttribute('color');
        const on = this.hasAttribute('active');
        const under = on || this.hasAttribute('under');
        this.attachShadow({ mode: 'open' });
        this.shadowRoot.innerHTML = `
            <style>
                :host {
                    display: flex;
                    align-items: center;
                    justify-content: center;
                    width: 27.2px;
                    flex: none;
                    box-sizing: border-box;
                    ${on ? 'background: #2a2f36;' : ''}
                    ${under ? 'border-bottom: 1px solid #5d8fb8;' : ''}
                }
                .tile {
                    width: 11px;
                    height: 11px;
                    border: 1px solid ${color};
                    background: ${this.getAttribute('bg')};
                    color: ${color};
                    font: 700 7px/11px "Open Sans", sans-serif;
                    text-align: center;
                }
            </style>
            ${label ? `<div class="tile">${label}</div>` : '<slot></slot>'}
        `;
    }
}

class ChartItem extends HTMLElement {
    connectedCallback() {
        const on = this.hasAttribute('selected');
        this.attachShadow({ mode: 'open' });
        this.shadowRoot.innerHTML = `
            <style>
                :host {
                    display: flex;
                    align-items: center;
                    gap: 5px;
                    height: 13.34px;
                    padding-left: 2px;
                    white-space: nowrap;
                    color: ${on ? '#444' : '#888'};
                    ${on ? 'background: #c6c6c6;' : ''}
                }
                ::slotted(svg) { flex: none; }
            </style>
            <slot></slot>
            <span>${this.getAttribute('label').replace('&', '&amp;')}</span>
        `;
    }
}

class ChartDialog extends HTMLElement {
    connectedCallback() {
        this.attachShadow({ mode: 'open' });
        const tpl = document.getElementById('chart-dialog-tpl');
        this.shadowRoot.appendChild(tpl.content.cloneNode(true));
    }
}

customElements.define('word-app', WordApp);
customElements.define('title-bar', TitleBar);
customElements.define('word-ribbon', WordRibbon);
customElements.define('r-group', RGroup);
customElements.define('r-btn', RBtn);
customElements.define('r-small', RSmall);
customElements.define('r-stack', RStack);
customElements.define('r-caret', RCaret);
customElements.define('doc-page', DocPage);
customElements.define('doc-para', DocPara);
customElements.define('status-bar', StatusBar);
customElements.define('task-bar', TaskBar);
customElements.define('task-icon', TaskIcon);
customElements.define('chart-item', ChartItem);
customElements.define('chart-dialog', ChartDialog);
</script>
</body>
</html>
